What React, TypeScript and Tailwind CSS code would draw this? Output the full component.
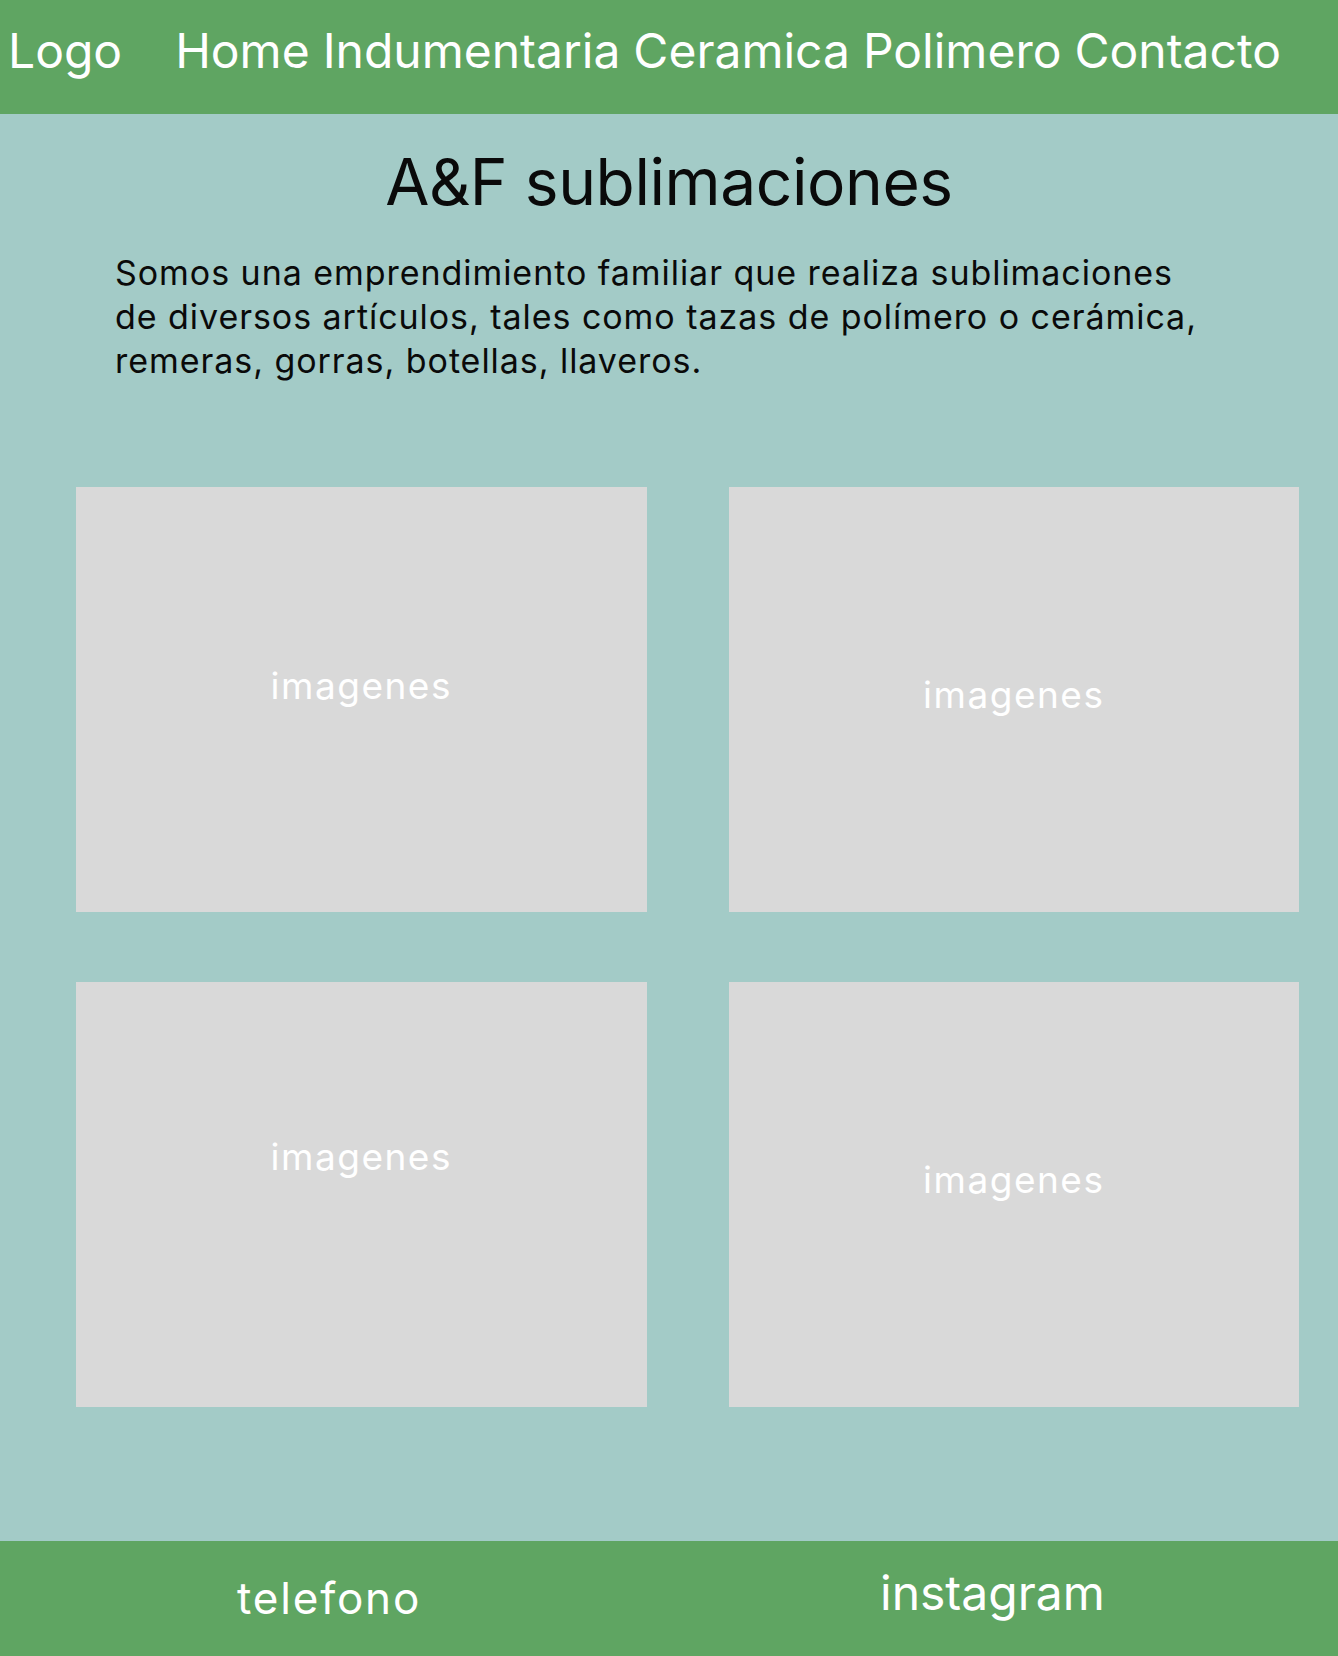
import React from "react";

const navItems = ["Home", "Indumentaria", "Ceramica", "Polimero", "Contacto"];

// each placeholder has the label sitting a little differently, like in the mockup
const gallery = [
  { id: 1, pad: "pt-[180px]" },
  { id: 2, pad: "pt-[189px]" },
  { id: 3, pad: "pt-[156px]" },
  { id: 4, pad: "pt-[179px]" },
];

const App = () => {
  return (
    <div className="w-[1338px] min-h-[1656px] bg-[#A3CBC7] flex flex-col font-['Inter',sans-serif]">
      {/* Header */}
      <header className="h-[114px] bg-[#5FA562] flex items-center pb-[13px] text-white text-[48px] leading-none">
        <span className="pl-[8px]">Logo</span>
        <nav className="flex items-center gap-[13px] ml-[53px]">
          {navItems.map((item) => (
            <a key={item} href="#" className="whitespace-nowrap">
              {item}
            </a>
          ))}
        </nav>
      </header>

      {/* Intro */}
      <section className="flex flex-col items-center">
        <h1 className="mt-[36px] text-[64px] leading-none tracking-[-0.4px] text-[#0a0a0a]">
          A&amp;F sublimaciones
        </h1>
        <p className="self-start ml-[115px] mt-[37px] text-[34px] leading-[44px] tracking-[0.95px] text-[#0a0a0a] whitespace-nowrap">
          Somos una emprendimiento familiar que realiza sublimaciones
          <br />
          de diversos artículos, tales como tazas de polímero o cerámica,
          <br />
          remeras, gorras, botellas, llaveros.
        </p>
      </section>

      {/* Gallery */}
      <section className="grid grid-cols-2 gap-x-[82px] gap-y-[70px] pl-[76px] pr-[39px] mt-[104px]">
        {gallery.map((g) => (
          <div
            key={g.id}
            className={`h-[425px] bg-[#D9D9D9] flex justify-center ${g.pad}`}
          >
            <span className="text-white text-[37px] leading-none tracking-[1.5px] h-fit">
              imagenes
            </span>
          </div>
        ))}
      </section>

      {/* Footer */}
      <footer className="mt-auto h-[115px] bg-[#5FA562] text-white flex items-start">
        <div className="w-[669px] pl-[237px] pt-[35px]">
          <span className="text-[44px] leading-none tracking-[1.8px]">
            telefono
          </span>
        </div>
        <div className="pl-[211px] pt-[28px]">
          <span className="text-[48px] leading-none">instagram</span>
        </div>
      </footer>
    </div>
  );
};

export default App;
